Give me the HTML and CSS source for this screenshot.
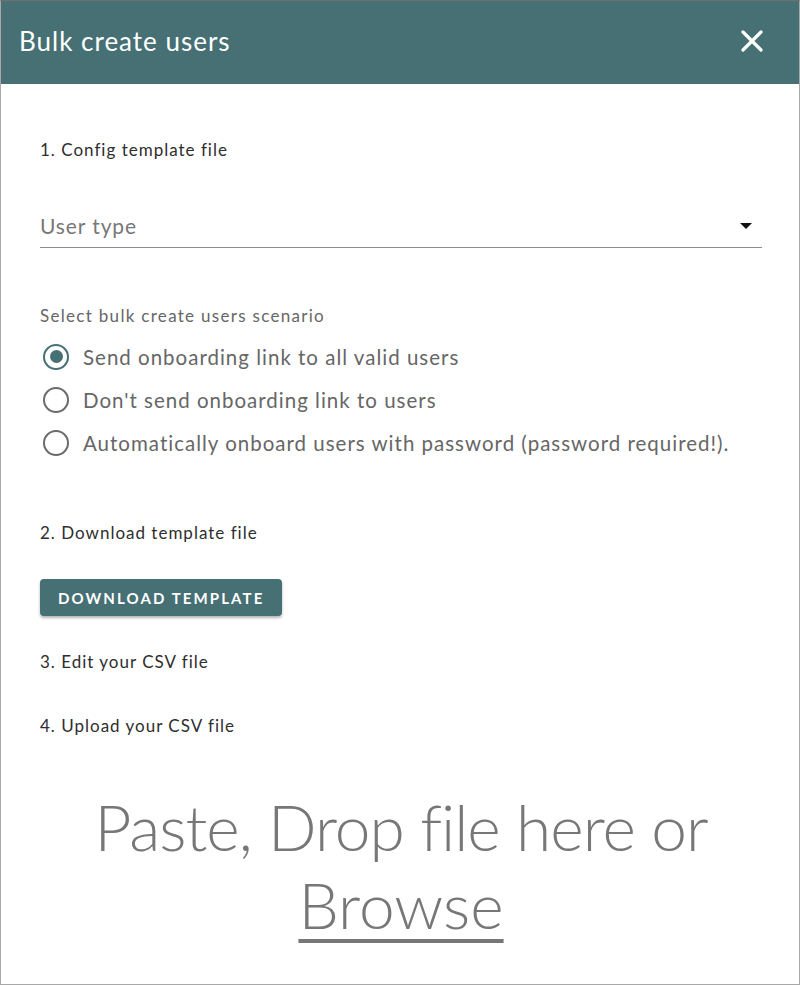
FILE: index.html
```html
<!DOCTYPE html>
<html lang="en">
<head>
<meta charset="utf-8">
<title>Bulk create users</title>
<link rel="stylesheet" href="styles.css">
</head>
<body>
<div class="dialog">
  <header class="header">
    <h1 class="title">Bulk create users</h1>
    <button class="close" aria-label="Close">
      <svg width="22" height="22" viewBox="0 0 22 22"><path d="M2 2 L20 20 M20 2 L2 20" stroke="#fff" stroke-width="3.2" stroke-linecap="round"/></svg>
    </button>
  </header>
  <div class="content">
    <p class="step step-1">1. Config template file</p>
    <div class="select">
      <span class="placeholder">User type</span>
      <span class="arrow"></span>
    </div>
    <p class="group-label">Select bulk create users scenario</p>
    <div class="radios">
      <label class="radio"><span class="circle checked"></span><span class="rlabel">Send onboarding link to all valid users</span></label>
      <label class="radio"><span class="circle"></span><span class="rlabel">Don't send onboarding link to users</span></label>
      <label class="radio"><span class="circle"></span><span class="rlabel">Automatically onboard users with password (password required!).</span></label>
    </div>
    <p class="step step-2">2. Download template file</p>
    <button class="btn">Download template</button>
    <p class="step step-3">3. Edit your CSV file</p>
    <p class="step step-4">4. Upload your CSV file</p>
    <div class="drop">
      <div class="drop-line first">Paste, Drop file here or</div>
      <div class="drop-line"><span class="browse">Browse</span></div>
    </div>
  </div>
</div>
</body>
</html>
```
FILE: styles.css
```css
* { box-sizing: border-box; }
html, body { margin: 0; padding: 0; background: #fff; }
body { font-family: Lato, "Open Sans", sans-serif; }

.dialog {
  width: 800px;
  height: 985px;
  border: 1px solid #a8a8a8;
  border-top-color: #6f6f6f;
  overflow: hidden;
  background: #fff;
}

.header {
  height: 83px;
  background: #467073;
  display: flex;
  align-items: center;
  justify-content: space-between;
  padding: 0 36px 4px 18px;
}
.title {
  margin: 0;
  font-size: 26px;
  font-weight: 400;
  color: #fff;
  letter-spacing: 1px;
}
.close {
  background: none;
  border: 0;
  padding: 0;
  width: 22px;
  height: 22px;
  display: block;
}
.close svg { display: block; }

.content {
  padding: 0 37px 0 39px;
}

.step {
  margin: 0;
  font-size: 17px;
  line-height: 24px;
  color: #2e2e2e;
  letter-spacing: 1px;
}
.step-1 { margin-top: 54px; }
.step-2 { margin-top: 57px; }
.step-3 { margin-top: 34px; }
.step-4 { margin-top: 40px; }

.select {
  margin-top: 43px;
  height: 43px;
  border-bottom: 1px solid #8c8c8c;
  display: flex;
  align-items: center;
  justify-content: space-between;
  padding: 0 10px 2px 0;
}
.placeholder {
  font-size: 21px;
  color: #777;
  letter-spacing: 0.9px;
}
.arrow {
  width: 0;
  height: 0;
  border-left: 6px solid transparent;
  border-right: 6px solid transparent;
  border-top: 6px solid #111;
  margin-top: 1px;
}

.group-label {
  margin: 58px 0 0;
  font-size: 17px;
  line-height: 20px;
  color: #666;
  letter-spacing: 1.3px;
}

.radios {
  margin-top: 9px;
}
.radio {
  display: flex;
  align-items: center;
  height: 43px;
}
.circle {
  width: 26px;
  height: 26px;
  border: 2.5px solid #6b6b6b;
  border-radius: 50%;
  margin-left: 3px;
  margin-right: 14px;
  display: flex;
  align-items: center;
  justify-content: center;
  flex: none;
}
.circle.checked { border-color: #467073; }
.circle.checked::after {
  content: "";
  width: 13px;
  height: 13px;
  border-radius: 50%;
  background: #467073;
}
.rlabel {
  font-size: 20.5px;
  color: #666;
  letter-spacing: 1px;
}

.btn {
  margin-top: 34px;
  display: block;
  height: 37px;
  padding: 0 18px;
  background: #467073;
  color: #fff;
  border: 0;
  border-radius: 4px;
  font-family: Lato, sans-serif;
  font-size: 15px;
  font-weight: 700;
  letter-spacing: 2.1px;
  text-transform: uppercase;
  box-shadow: 0 2px 3px rgba(0,0,0,0.3);
}

.drop {
  margin-top: 50px;
  text-align: center;
  color: #777;
  font-size: 64px;
  font-weight: 300;
  line-height: 78px;
}
.drop-line.first { letter-spacing: -1px; }
.browse {
  text-decoration: underline;
  text-decoration-thickness: 4px;
  text-underline-offset: 10px;
}
```
